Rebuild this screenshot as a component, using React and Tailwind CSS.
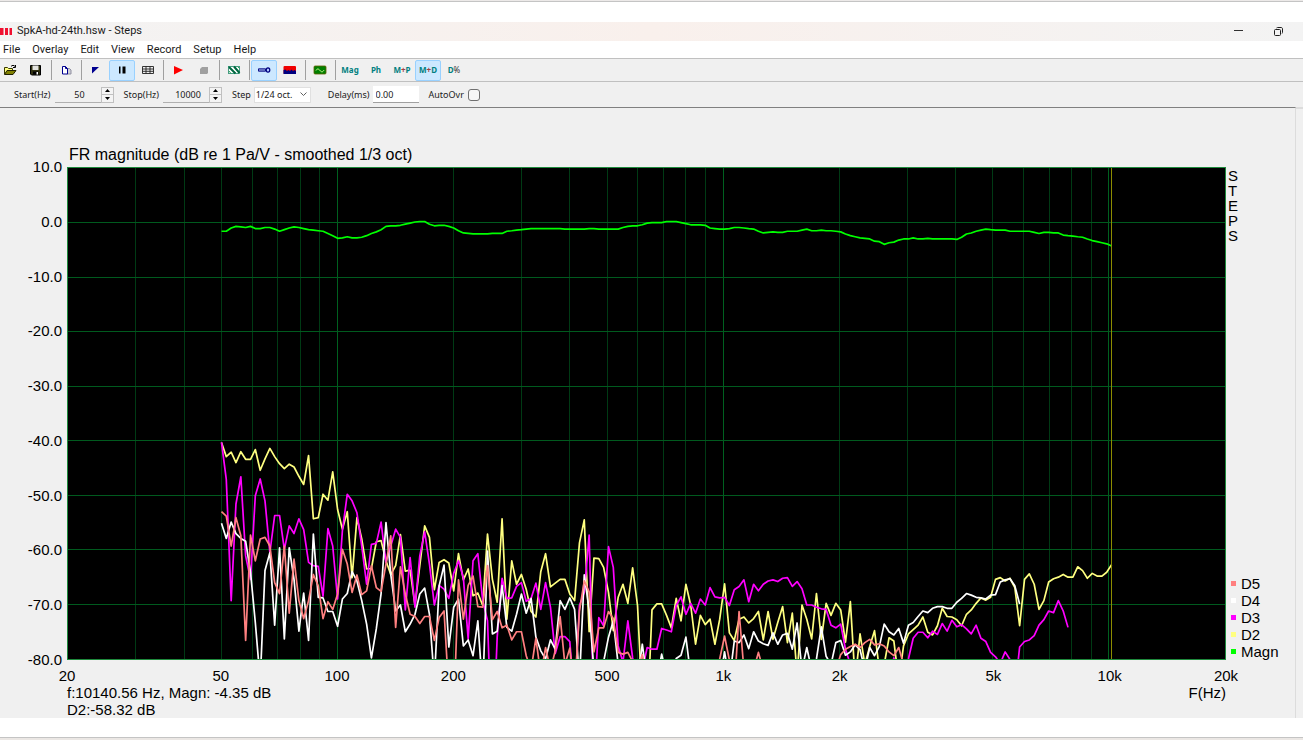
import { useState } from 'react'

// ── Chart constants ───────────────────────────────────────────────────────────

const W = 1160
const H = 492
const F_MIN = 20
const F_MAX = 20000
const F_START = 50
const DB_TOP = 10
const DB_BOTTOM = -80
const CURSOR_HZ = 10140.56

const Y_TICKS = [10, 0, -10, -20, -30, -40, -50, -60, -70, -80]
const X_TICKS = [
  { f: 20, label: '20' },
  { f: 50, label: '50' },
  { f: 100, label: '100' },
  { f: 200, label: '200' },
  { f: 500, label: '500' },
  { f: 1000, label: '1k' },
  { f: 2000, label: '2k' },
  { f: 5000, label: '5k' },
  { f: 10000, label: '10k' },
  { f: 20000, label: '20k' },
]

// ── Sweep data: one level in dB per 1/24 octave step, starting at 50 Hz ───────

const MAGN = [
  -1.6, -1.6, -1, -0.7, -0.8, -0.9, -0.7, -1.1, -1.1, -0.9, -0.9, -1.2, -1.6, -1.3, -1, -0.8, -0.9, -1.1, -1.3, -1.4,
  -1.5, -1.6, -2, -2.4, -2.9, -2.8, -2.6, -2.8, -2.8, -2.7, -2.4, -2, -1.7, -1.3, -0.7, -0.6, -0.6, -0.5, -0.3, -0.1,
  0.1, 0.2, 0.2, -0.3, -0.6, -0.5, -0.5, -0.7, -1, -1.5, -1.9, -2, -2.1, -2.1, -2.1, -2.1, -2, -2, -2, -1.6,
  -1.5, -1.4, -1.3, -1.2, -1.1, -1.1, -1.1, -1.1, -1.1, -1.1, -1.1, -1.2, -1.2, -1.2, -1.2, -1.2, -1.1, -1.1, -1.2, -1.2,
  -1.2, -1.2, -1.2, -0.9, -0.7, -0.6, -0.6, -0.4, -0.1, 0, 0, 0, 0.2, 0.2, 0.2, 0, -0.2, -0.4, -0.4, -0.4,
  -0.5, -1, -1.1, -1.2, -1.2, -1.1, -0.9, -0.9, -1, -1.1, -1.2, -1.6, -1.9, -1.8, -1.7, -1.8, -1.8, -1.6, -1.6, -1.6,
  -1.4, -1.2, -1.5, -1.5, -1.4, -1.5, -1.5, -1.6, -1.7, -2.1, -2.4, -2.6, -2.8, -2.9, -3, -3.4, -3.5, -4, -3.7, -3.6,
  -3.2, -3, -3, -2.8, -3, -3, -2.9, -3, -3, -3, -3, -3, -3.1, -2.7, -2.1, -1.9, -1.6, -1.4, -1.2, -1.3,
  -1.4, -1.4, -1.4, -1.6, -1.6, -1.6, -1.6, -1.6, -1.8, -2, -1.8, -1.8, -1.9, -1.9, -2.3, -2.4, -2.5, -2.6, -2.7, -3,
  -3.3, -3.5, -3.7, -3.9, -4.3,
]

const D2 = [
  -40.3, -42.9, -42.1, -44, -42, -43.4, -43.4, -41.6, -45.4, -43.3, -41.4, -42.9, -44.2, -45.1, -44.3, -44.8, -46.5, -48, -42.7, -54.3,
  -54.1, -49.8, -50.9, -45.7, -52.6, -56.2, -53, -65.1, -54.1, -58, -63.5, -63.4, -58.5, -58.3, -62, -64.5, -62.9, -57.2, -63.9, -63.7,
  -70.2, -62.9, -55.6, -57.7, -67.3, -62.3, -61.8, -62.4, -67.5, -60.7, -65.5, -63.5, -68.4, -67.9, -70.2, -57.1, -65.4, -69.6, -54.3, -72.7,
  -62, -66.3, -64.5, -67.2, -71.3, -72.3, -64, -60.7, -66.8, -66.1, -65.4, -65.4, -68.1, -69.3, -58.7, -54.5, -75, -61.5, -61.6, -63.2,
  -67.8, -74.8, -68.7, -66.3, -69.8, -63.3, -70.2, -88, -92, -71, -69.9, -69.9, -72, -74.3, -68.9, -73, -66.3, -70.1, -77.3, -72,
  -73.7, -72.7, -77.3, -72.7, -66.2, -75.2, -76.6, -72.7, -72.3, -73.4, -72.6, -71.3, -76.5, -71.3, -76.4, -73.3, -70.4, -77, -71.6, -83,
  -70.1, -72.7, -76.3, -68, -76.4, -69.8, -72, -69.8, -71, -76.9, -69.5, -84, -75.4, -81, -77.7, -74.8, -82, -81, -76.1, -76.7,
  -84, -77.6, -75.4, -74.6, -73.8, -72.3, -75.1, -75.6, -73.9, -70.7, -72.2, -72.3, -72.8, -73.9, -71.8, -71, -69.8, -68.8, -69.2, -68.7,
  -65.4, -65.1, -65.7, -65.2, -66.9, -73.9, -65.4, -64.4, -66.3, -70.9, -69.3, -65.9, -65.3, -65, -64.5, -65, -65, -63.1, -63.8, -65.2,
  -64.3, -64.8, -64.8, -64.1, -62.7,
]

const D3 = [
  -40.3, -47.1, -69.3, -51.6, -46.6, -61.1, -65.4, -50.1, -47, -51, -60.5, -53.7, -53.7, -59.9, -55.6, -57, -54.3, -56.3, -62.3, -62.9,
  -63, -68.5, -56.1, -59.3, -69, -56.5, -49.8, -51, -53.2, -59.3, -66.3, -59, -58.8, -54.9, -62.3, -59.3, -56.2, -57.7, -71, -61.4,
  -70.5, -61.1, -56.7, -62.6, -70.1, -66.5, -67.2, -68.9, -64.3, -62, -65.1, -76.3, -62, -60.7, -69.3, -73, -98, -76, -65.2, -68.9,
  -68.8, -66.7, -66, -69.4, -68.9, -66.1, -70.9, -66, -70.5, -79, -75.9, -75.9, -76.8, -88, -70.2, -67.8, -57.3, -90, -72.4, -73.9,
  -59.4, -63.2, -77.6, -80.6, -73, -79.8, -84, -82, -77.9, -78.2, -78.2, -74.4, -74.7, -75, -70.2, -68.6, -71.8, -69.8, -71.6, -69,
  -70.1, -66.9, -68.6, -68.8, -68.7, -70.2, -67.3, -66.7, -65.5, -69.5, -66.3, -67.5, -66.3, -65.7, -65.5, -65.8, -65.2, -65.1, -66.7, -65.8,
  -67.1, -70.1, -70.1, -70.5, -70.8, -70.9, -73.8, -74.3, -73.6, -78.2, -81, -84, -84, -84, -84, -84, -84, -84, -84, -79.8,
  -83, -82, -80, -76.2, -75.1, -75.1, -76.1, -74.9, -75.5, -73.5, -74.9, -72.9, -74.1, -73.7, -74.5, -75.4, -73.8, -76.2, -76.8, -78.8,
  -79.6, -80.8, -78.7, -80.1, -86, -77.8, -76.8, -76.5, -75.7, -73.8, -72.8, -71.2, -71.5, -69.3, -71.2, -74.2,
]

const D4 = [
  -55.1, -57.9, -54.9, -57, -57.9, -58.4, -64.1, -73.3, -84, -63.8, -60.5, -73.8, -59.6, -76.3, -59.6, -65.4, -74.9, -67.9, -76.6, -57.1,
  -68.7, -68.8, -71.3, -71.3, -74, -69, -68, -64, -65.7, -69.3, -73.6, -79.8, -74.5, -68, -55, -64.5, -71.2, -70.1, -75, -73.6,
  -71.8, -68.1, -67, -71.8, -84, -66.6, -62.8, -77.8, -70.5, -69, -77.6, -76.5, -79.4, -73, -86, -60.2, -75.4, -74.9, -66.5, -74.2,
  -74.9, -71.8, -68.1, -71.6, -68.9, -76, -78.5, -80, -76.5, -78.2, -69.3, -70.9, -68.8, -70.9, -84, -64.6, -70.9, -82, -86, -80.5,
  -76, -73, -81, -84, -84, -84, -84, -77.3, -84, -84, -84, -79.1, -83, -83, -79.9, -79.3, -76, -83, -84, -84,
  -84, -84, -84, -84, -78.7, -84, -76.7, -77, -75.6, -78.1, -75, -76.7, -77.2, -77.5, -75.2, -77.3, -75.6, -75.3, -78.2, -73.4,
  -82, -77.9, -82, -80, -74.1, -79.5, -81, -77, -76.6, -79.3, -78.7, -77.4, -78.3, -82, -77.9, -79.4, -77.7, -73.6, -75, -75.6,
  -74.4, -77.1, -73.8, -73.3, -72.2, -71.2, -71.5, -70.7, -70.4, -70.4, -70.7, -70.7, -69.6, -68.9, -68, -68.3, -68.7, -68.8, -69, -68.3,
  -68.2, -65.9, -65.5, -65.3, -66.6, -69.9,
]

const D5 = [
  -53, -53.8, -59.3, -54.1, -57.4, -76.6, -57.3, -62, -58, -57.7, -59.3, -66, -68, -59.3, -71.6, -61.7, -69.3, -72.6, -69.3, -64.5,
  -66.6, -72.6, -69.5, -70.9, -68.1, -59.9, -62.6, -67.8, -64.6, -68.2, -67.5, -62.9, -66.9, -67.6, -62.6, -57.4, -74.2, -63.1, -68.1, -71.8,
  -72.2, -73.5, -72.2, -72.2, -76.6, -72.4, -71.2, -86, -90, -65.5, -72.7, -66.5, -64.8, -70.4, -70.5, -62.9, -72.8, -71.3, -74.3, -73.8,
  -76.5, -75, -75, -79.4, -82, -76.2, -83, -77.9, -82, -78.5, -72.2, -81, -78, -86, -71.2, -65.7, -67.7, -78.7, -74.3, -74.3,
  -71.3, -72.6, -78.8, -79.1, -78.8, -80.5, -82, -79.2, -84, -84, -84, -84, -84, -84, -84, -84, -84, -84, -84, -84,
  -84, -84, -84, -80, -75.8, -80.2, -86, -71.3, -82, -82, -82, -78.8, -82, -84, -84, -84, -84, -84, -84, -84,
  -84, -84, -84, -84, -84, -84, -84, -82, -79.2, -78.2, -77.7, -77.3, -77.9, -77, -76.4, -77.4, -77.2, -77.6, -78.7, -79.4,
  -77.9, -81,
]

// Back to front
const SERIES = [
  { name: 'D2', levels: D2, stroke: '#ffff80' },
  { name: 'D3', levels: D3, stroke: '#ff00ff' },
  { name: 'D4', levels: D4, stroke: '#ffffff' },
  { name: 'D5', levels: D5, stroke: '#ff8080' },
  { name: 'Magn', levels: MAGN, stroke: '#00ff00' },
]

const LEGEND = [
  { name: 'D5', swatch: 'bg-[#ff8080]' },
  { name: 'D4', swatch: 'bg-white' },
  { name: 'D3', swatch: 'bg-[#ff00ff]' },
  { name: 'D2', swatch: 'bg-[#ffff80]' },
  { name: 'Magn', swatch: 'bg-[#00ff00]' },
]

const fracX = f => Math.log(f / F_MIN) / Math.log(F_MAX / F_MIN)
const toX = f => fracX(f) * W
const toY = db => ((DB_TOP - db) / (DB_TOP - DB_BOTTOM)) * H

function toPoints(levels) {
  return levels
    .map((db, i) => `${toX(F_START * 2 ** (i / 24)).toFixed(1)},${toY(db).toFixed(1)}`)
    .join(' ')
}

function gridFrequencies() {
  const out = []
  for (let decade = 10; decade <= 10000; decade *= 10) {
    for (let n = 1; n < 10; n++) {
      const f = n * decade
      if (f > F_MIN && f < F_MAX) out.push({ f, major: n === 1 })
    }
  }
  return out
}

// ── Chart ─────────────────────────────────────────────────────────────────────

function Plot() {
  return (
    <svg
      className="block w-full h-[493px] bg-black border border-[#1e8a3c]"
      viewBox={`0 0 ${W} ${H}`}
      preserveAspectRatio="none"
      role="img"
      aria-label="FR magnitude"
    >
      <g fill="none" shapeRendering="crispEdges">
        {gridFrequencies().map(({ f, major }) => (
          <line
            key={f}
            x1={toX(f)} x2={toX(f)} y1={0} y2={H}
            stroke={major ? '#00601f' : '#003a14'}
            strokeWidth="1"
            vectorEffect="non-scaling-stroke"
          />
        ))}
        {Y_TICKS.slice(1, -1).map(db => (
          <line
            key={db}
            x1={0} x2={W} y1={toY(db)} y2={toY(db)}
            stroke="#005a1e"
            strokeWidth="1"
            vectorEffect="non-scaling-stroke"
          />
        ))}
      </g>
      {SERIES.map(s => (
        <polyline
          key={s.name}
          points={toPoints(s.levels)}
          fill="none"
          stroke={s.stroke}
          strokeWidth="1.7"
          strokeLinejoin="round"
          vectorEffect="non-scaling-stroke"
        />
      ))}
      <line
        x1={toX(CURSOR_HZ)} x2={toX(CURSOR_HZ)} y1={0} y2={H}
        stroke="#8c8c00"
        shapeRendering="crispEdges"
        vectorEffect="non-scaling-stroke"
      />
    </svg>
  )
}

function ChartPanel() {
  return (
    <div className="flex bg-[#f0f0f0] font-['Liberation_Sans',Arial,sans-serif] text-[15px] leading-[17px] text-black">
      <main className="flex-1 min-w-0 pt-[38px] border-t border-r border-t-[#808080] border-r-[#dcdcdc]">
        <h1 className="pl-[69px] text-[16px] leading-[18px] mb-[3px] whitespace-nowrap">
          FR magnitude (dB re 1 Pa/V - smoothed 1/3 oct)
        </h1>

        <div className="flex">
          {/* Level axis */}
          <div className="w-[67px] shrink-0 flex flex-col justify-between -mt-[9px] -mb-2 pr-[5px] text-right">
            {Y_TICKS.map(db => <span key={db}>{db.toFixed(1)}</span>)}
          </div>

          <div className="flex-1 min-w-0">
            <Plot />
          </div>

          {/* Brand letters + legend */}
          <div className="w-[69px] shrink-0 flex flex-col justify-between">
            <div className="flex flex-col pt-px pl-[2px] leading-[15px]">
              {['S', 'T', 'E', 'P', 'S'].map((c, i) => <span key={i}>{c}</span>)}
            </div>
            <ul className="pl-[5px]">
              {LEGEND.map(item => (
                <li key={item.name} className="flex items-center gap-[5px]">
                  <span className={`size-[5px] shrink-0 ${item.swatch}`} />
                  {item.name}
                </li>
              ))}
            </ul>
          </div>
        </div>

        {/* Frequency axis */}
        <div className="relative h-6 ml-[67px] mr-[69px]">
          {X_TICKS.map(t => (
            <span
              key={t.f}
              className="absolute top-[7px] -translate-x-1/2"
              style={{ left: `${fracX(t.f) * 100}%` }}
            >
              {t.label}
            </span>
          ))}
        </div>

        <div className="flex justify-between ml-[67px] mr-[69px]">
          <div>
            <p>f:10140.56 Hz, Magn: -4.35 dB</p>
            <p>D2:-58.32 dB</p>
          </div>
          <p>F(Hz)</p>
        </div>
      </main>
      <div className="w-[7px] shrink-0 border-t-2 border-[#dcdcdc]" />
    </div>
  )
}

// ── Toolbar icons ─────────────────────────────────────────────────────────────

function Icon({ children }) {
  return (
    <svg className="w-[14px] h-3" viewBox="0 0 14 12" fill="none" aria-hidden="true">
      {children}
    </svg>
  )
}

function OpenIcon() {
  return (
    <Icon>
      <path d="M1.500 10V3.500h3l1 1h4V6" fill="#ffff80" stroke="#3a3a00" />
      <path d="M1.500 10.500L4 6.500h9l-3 4z" fill="#808000" stroke="#202000" />
      <path d="M8 2.500c1-1.500 3-1.500 4 0M12.500 1v2.500H10" stroke="#000" />
    </Icon>
  )
}

function SaveIcon() {
  return (
    <Icon>
      <path d="M1.500 1.500h10v9.500h-9l-1-1z" fill="#303010" stroke="#000" />
      <rect x="3.500" y="1.500" width="6" height="4.500" fill="#e4e4e0" />
      <rect x="4" y="7.500" width="5.500" height="3" fill="#000" />
      <rect x="7.500" y="8" width="1.500" height="2.500" fill="#fff" />
    </Icon>
  )
}

function CopyIcon() {
  return (
    <Icon>
      <path d="M7.500 4.500h3l1.500 1.500V10H7.500z" fill="#d0d0d8" stroke="#9090a0" />
      <path d="M3.500 2.500h3l2 2v5.500h-5z" fill="#fff" stroke="#000090" />
      <path d="M6.500 2.500v2h2" stroke="#000090" />
    </Icon>
  )
}

function FlagIcon() {
  return (
    <Icon>
      <path d="M3 3h7L3 9.500z" fill="#000090" />
    </Icon>
  )
}

function PauseIcon() {
  return (
    <Icon>
      <path d="M4 2.500h1.500v7H4zM7.500 2.500h3v7h-3z" fill="#000" />
    </Icon>
  )
}

function TableIcon() {
  return (
    <Icon>
      <path d="M1.500 2.500h11v7h-11zM1.500 5h11M1.500 7.300h11M5 2.500v7M9 2.500v7" stroke="#202020" strokeWidth="0.9" />
    </Icon>
  )
}

function PlayIcon() {
  return (
    <Icon>
      <path d="M3 2L12 6l-9 4.500z" fill="#ff0000" />
    </Icon>
  )
}

function StopIcon() {
  return (
    <Icon>
      <path d="M3 5l2-2h6v6l-1 1H3z" fill="#a0a0a0" />
    </Icon>
  )
}

function HatchIcon() {
  return (
    <Icon>
      <rect x="1.500" y="2.500" width="11" height="7" fill="#fff" stroke="#208868" strokeWidth="0.800" />
      <path d="M2 3l6.500 6.500M7 2.500l5.500 6.500" stroke="#006840" strokeWidth="2" />
      <path d="M2 7l2 2.500M10.500 2.500l2 2" stroke="#30a060" strokeWidth="1" />
    </Icon>
  )
}

function MicIcon() {
  return (
    <Icon>
      <path d="M1.500 4.800h7v2.400h-7z" fill="#8898d8" stroke="#000080" strokeWidth="0.900" />
      <ellipse cx="11" cy="6" rx="1.800" ry="2.200" fill="#b0c8ff" stroke="#000080" strokeWidth="1.200" />
    </Icon>
  )
}

function SpectrumIcon() {
  return (
    <Icon>
      <rect x="0.500" y="2" width="12.500" height="8" rx="1" fill="#f00000" />
      <path d="M0.500 10V6l2-.5L4 7l1.500-1L7 7l1.500-1.500L10 7l1.500-1 1.500 1v3z" fill="#000080" />
    </Icon>
  )
}

function ScopeIcon() {
  return (
    <Icon>
      <rect x="1" y="2" width="12" height="8" rx="1" fill="#008000" stroke="#606000" strokeWidth="0.800" />
      <path d="M3 6.500c1-2 2.500-2 4 0s3 1.500 4-.500" stroke="#d0ff90" />
    </Icon>
  )
}

// ── Bars ──────────────────────────────────────────────────────────────────────

function TitleBar() {
  return (
    <header className="flex items-center h-[19px] bg-linear-to-r from-[#f3f3f3] via-[#f9f0ec] to-[#f3f3f3] font-[Roboto,sans-serif] text-[11px] text-[#1a1a1a]">
      <svg className="w-[13px] h-[9px] mr-1" viewBox="0 0 13 9" aria-hidden="true">
        <path d="M0 1h3.500v7H0zM5 1h3v7H5zM9.500 1H12v7H9.500z" fill="#f01030" />
      </svg>
      <p className="flex-1">SpkA-hd-24th.hsw - Steps</p>
      <button aria-label="Minimize" className="w-10 flex justify-center">
        <svg className="w-[9px] h-[9px]" viewBox="0 0 9 9" fill="none">
          <path d="M0 3.500h9" stroke="#303030" />
        </svg>
      </button>
      <button aria-label="Restore" className="w-10 mr-[5px] flex justify-center">
        <svg className="w-[9px] h-[9px]" viewBox="0 0 9 9" fill="none" stroke="#202020">
          <rect x="0.500" y="2.500" width="6" height="6" rx="1" />
          <path d="M2.500 1c.3-.4.600-.5 1-.5H7c1 0 1.500.5 1.500 1.500v3.500c0 .5-.1.800-.5 1" />
        </svg>
      </button>
    </header>
  )
}

function MenuBar() {
  return (
    <nav className="flex items-center gap-3 h-[17px] pt-px pl-[3px] bg-white font-[Roboto,sans-serif] text-[11px] text-[#1a1a1a]">
      {['File', 'Overlay', 'Edit', 'View', 'Record', 'Setup', 'Help'].map(m => (
        <button key={m}>{m}</button>
      ))}
    </nav>
  )
}

function ToolButton({ label, active, onClick, children }) {
  return (
    <button
      aria-label={label}
      aria-pressed={active}
      onClick={onClick}
      className={`w-[26px] h-[21px] flex items-center justify-center rounded-xs border ${active ? 'bg-[#cce8ff] border-[#99d1ff]' : 'border-transparent'}`}
    >
      {children}
    </button>
  )
}

function Separator() {
  return (
    <div className="w-1 h-5 flex justify-center">
      <div className="w-px bg-[#a0a0a0]" />
    </div>
  )
}

const MODES = [
  { id: 'Mag', text: 'Mag' },
  { id: 'Ph', text: 'Ph' },
  { id: 'M+P', text: <>M<span className="text-[#a04040]">+</span>P</> },
  { id: 'M+D', text: <>M<span className="text-[#a04040]">+</span>D</> },
  { id: 'D%', text: <>D<span className="font-normal text-[#303030]">%</span></> },
]

function ToolBar() {
  const [mode, setMode] = useState('M+D')
  return (
    <div className="flex items-center h-[24px] -ml-[3px] border-y border-[#c0c0c0] bg-[#f0f0f0]">
      <ToolButton label="Open"><OpenIcon /></ToolButton>
      <ToolButton label="Save"><SaveIcon /></ToolButton>
      <Separator />
      <ToolButton label="Copy"><CopyIcon /></ToolButton>
      <Separator />
      <ToolButton label="Marker"><FlagIcon /></ToolButton>
      <ToolButton label="Bars" active><PauseIcon /></ToolButton>
      <ToolButton label="Table"><TableIcon /></ToolButton>
      <Separator />
      <ToolButton label="Record"><PlayIcon /></ToolButton>
      <ToolButton label="Stop"><StopIcon /></ToolButton>
      <Separator />
      <ToolButton label="Calibrate"><HatchIcon /></ToolButton>
      <Separator />
      <ToolButton label="Microphone" active><MicIcon /></ToolButton>
      <ToolButton label="Spectrum"><SpectrumIcon /></ToolButton>
      <Separator />
      <ToolButton label="Scope"><ScopeIcon /></ToolButton>
      <Separator />
      {MODES.map(m => (
        <ToolButton key={m.id} label={m.id} active={mode === m.id} onClick={() => setMode(m.id)}>
          <span className="text-[8px] leading-none font-bold text-[#008080]">{m.text}</span>
        </ToolButton>
      ))}
    </div>
  )
}

function SpinField({ id, label, initial }) {
  const [value, setValue] = useState(initial)
  return (
    <div className="flex items-center">
      <label htmlFor={id} className="mr-1">{label}</label>
      <input
        id={id}
        value={value}
        onChange={e => setValue(Number(e.target.value) || 0)}
        className="w-[46px] h-[17px] pl-1 text-center border-b border-[#b0b0b0] bg-[#f0f0f0]"
      />
      <div className="w-[13px] h-4 flex flex-col border border-[#c0c0c0] bg-[#f4f4f4]">
        <button aria-label={`${label} up`} onClick={() => setValue(value + 1)} className="flex-1 flex items-center justify-center border-b border-[#c0c0c0]">
          <svg className="w-[5px] h-[3px]" viewBox="0 0 5 3"><path d="M0 3L2.500 0 5 3z" /></svg>
        </button>
        <button aria-label={`${label} down`} onClick={() => setValue(value - 1)} className="flex-1 flex items-center justify-center">
          <svg className="w-[5px] h-[3px]" viewBox="0 0 5 3"><path d="M0 0h5L2.500 3z" /></svg>
        </button>
      </div>
    </div>
  )
}

function SweepBar() {
  return (
    <div className="flex items-center gap-[10px] h-[25px] pl-[14px] bg-[#f0f0f0] text-[9px] text-[#1a1a1a]">
      <SpinField id="start" label="Start(Hz)" initial={50} />
      <SpinField id="stop" label="Stop(Hz)" initial={10000} />
      <div className="flex items-center">
        <label htmlFor="step" className="mr-[3px]">Step</label>
        <div className="relative flex items-center">
          <select id="step" className="appearance-none w-[57px] h-4 pl-px bg-white border border-[#e0e0e0]">
            <option>1/24 oct.</option>
          </select>
          <svg className="absolute right-1 w-[7px] h-[5px] pointer-events-none" viewBox="0 0 7 5" fill="none">
            <path d="M.5.5l3 3 3-3" stroke="#606060" />
          </svg>
        </div>
      </div>
      <div className="flex items-center ml-[7px]">
        <label htmlFor="delay" className="mr-[3px]">Delay(ms)</label>
        <input id="delay" defaultValue="0.00" className="w-[46px] h-[17px] pl-[3px] bg-white border-b border-[#a0a0a0]" />
      </div>
      <div className="flex items-center">
        <label htmlFor="autoovr" className="mr-1">AutoOvr</label>
        <input id="autoovr" type="checkbox" className="appearance-none size-3 border border-[#707070] rounded-[3px] bg-[#f6f6f6] checked:bg-[#0067c0]" />
      </div>
    </div>
  )
}

// ── Main component ────────────────────────────────────────────────────────────

export default function App() {
  return (
    <div className="overflow-hidden bg-white font-['Noto_Sans','Open_Sans',sans-serif]">
      <div className="h-[2px] bg-[#ece9e8] border-b border-[#c4c4c4]" />
      <div className="pt-5 pb-[19px]">
        <TitleBar />
        <MenuBar />
        <ToolBar />
        <SweepBar />
        <ChartPanel />
      </div>
      <div className="h-[3px] bg-[#ebe7e4] border-t border-[#c4c4c4]" />
    </div>
  )
}
